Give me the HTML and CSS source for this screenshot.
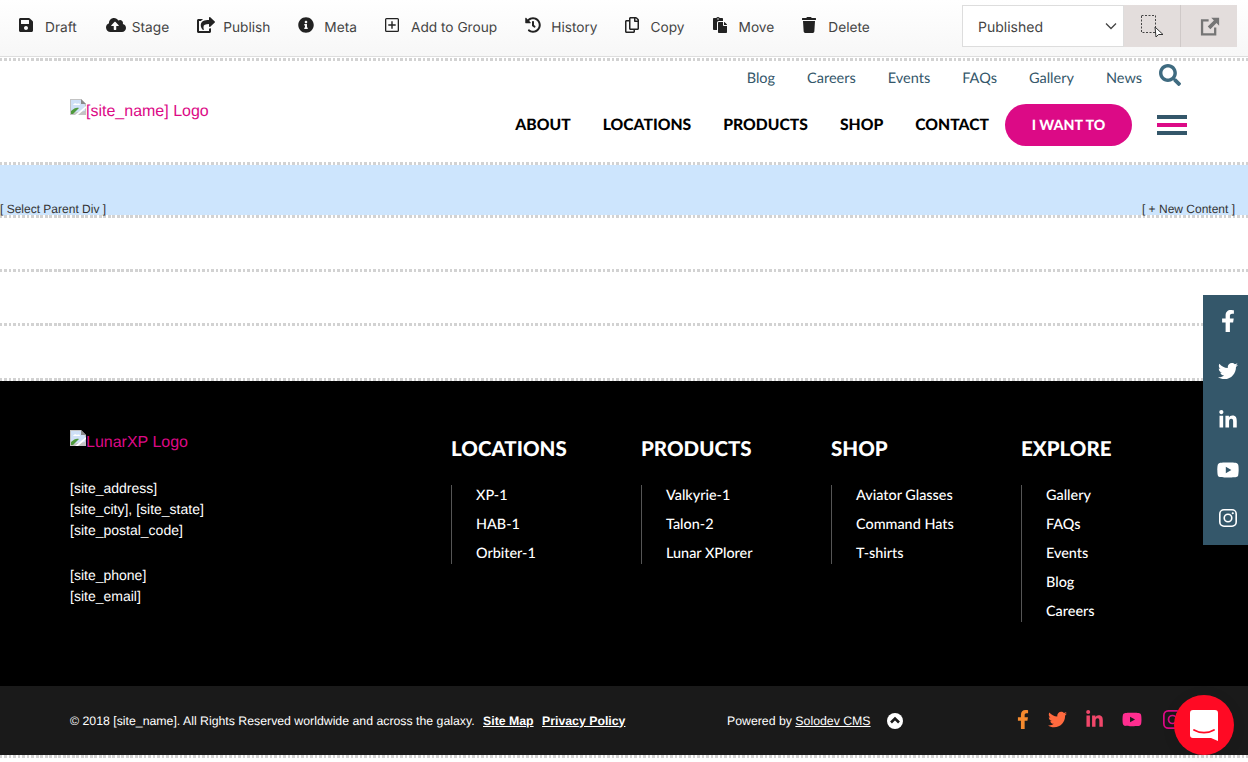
FILE: index.html
```html
<!DOCTYPE html>
<html lang="en">
<head>
  <meta charset="UTF-8" />
  <title>Solodev CMS</title>
  <link rel="stylesheet" href="styles.css">
</head>
<body>
  <svg class="sprite" aria-hidden="true">
    <symbol id="i-save" viewBox="0 0 448 512"><path d="M433.941 129.941l-83.882-83.882A48 48 0 0 0 316.118 32H48C21.49 32 0 53.49 0 80v352c0 26.51 21.49 48 48 48h352c26.51 0 48-21.49 48-48V163.882a48 48 0 0 0-14.059-33.941zM224 416c-35.346 0-64-28.654-64-64 0-35.346 28.654-64 64-64s64 28.654 64 64c0 35.346-28.654 64-64 64zm96-304.52V212c0 6.627-5.373 12-12 12H76c-6.627 0-12-5.373-12-12V108c0-6.627 5.373-12 12-12h228.52c3.183 0 6.235 1.264 8.485 3.515l3.48 3.48A11.996 11.996 0 0 1 320 111.48z"/></symbol>
    <symbol id="i-cloud" viewBox="0 0 640 512"><path d="M537.6 226.6c4.1-10.7 6.4-22.4 6.4-34.6 0-53-43-96-96-96-19.7 0-38.1 6-53.3 16.2C367 64.2 315.3 32 256 32c-88.4 0-160 71.6-160 160 0 2.7.1 5.4.2 8.1C40.2 219.8 0 273.2 0 336c0 79.5 64.5 144 144 144h368c70.7 0 128-57.3 128-128 0-61.9-44-113.6-102.4-125.4zM393.4 288H328v112c0 8.8-7.2 16-16 16h-48c-8.8 0-16-7.2-16-16V288h-65.4c-14.3 0-21.4-17.2-11.3-27.3l105.4-105.4c6.2-6.2 16.4-6.2 22.6 0l105.4 105.4c10.1 10.1 2.9 27.3-11.3 27.3z"/></symbol>
    <symbol id="i-share" viewBox="0 0 576 512"><path d="M568.482 177.448L424.479 313.433C409.3 327.768 384 317.14 384 295.985v-71.963c-144.575.97-205.566 35.113-164.775 171.353 4.483 14.973-12.846 26.567-25.006 17.33C155.252 383.105 120 326.488 120 269.339c0-143.937 117.599-172.5 264-173.312V24.012c0-21.174 25.317-31.768 40.479-17.448l144.003 135.988c10.02 9.463 10.028 25.425 0 34.896zM384 379.128V448H64V128h50.916a11.99 11.99 0 0 0 8.648-3.693c14.953-15.568 32.237-27.89 51.014-37.676C186.708 80.83 184.958 64 173.232 64H48C21.49 64 0 85.49 0 112v352c0 26.51 21.49 48 48 48h352c26.51 0 48-21.49 48-48v-88.806c0-8.288-8.197-14.066-16.011-11.302a71.83 71.83 0 0 1-34.189 3.377c-7.27-1.046-13.8 4.514-13.8 11.859z"/></symbol>
    <symbol id="i-info" viewBox="0 0 512 512"><path d="M256 8C119.043 8 8 119.083 8 256c0 136.997 111.043 248 248 248s248-111.003 248-248C504 119.083 392.957 8 256 8zm0 110c23.196 0 42 18.804 42 42s-18.804 42-42 42-42-18.804-42-42 18.804-42 42-42zm56 254c0 6.627-5.373 12-12 12h-88c-6.627 0-12-5.373-12-12v-24c0-6.627 5.373-12 12-12h12v-64h-12c-6.627 0-12-5.373-12-12v-24c0-6.627 5.373-12 12-12h64c6.627 0 12 5.373 12 12v100h12c6.627 0 12 5.373 12 12v24z"/></symbol>
    <symbol id="i-plus" viewBox="0 0 14 14"><path d="M1.5 0h11A1.5 1.5 0 0 1 14 1.5v11a1.5 1.5 0 0 1-1.5 1.5h-11A1.5 1.5 0 0 1 0 12.500v-11A1.500 1.500 0 0 1 1.500 0zM1.300 1.300v11.400h11.400V1.300zM6.300 3.300h1.400v3h3v1.400h-3v3H6.300v-3h-3V6.300h3z"/></symbol>
    <symbol id="i-history" viewBox="0 0 512 512"><path d="M504 255.531c.253 136.64-111.18 248.372-247.82 248.468-59.015.042-113.223-20.53-155.822-54.911-11.077-8.94-11.905-25.541-1.839-35.607l11.267-11.267c8.609-8.609 22.353-9.551 31.891-1.984C173.062 425.135 212.781 440 256 440c101.705 0 184-82.311 184-184 0-101.705-82.311-184-184-184-48.814 0-93.149 18.969-126.068 49.932l50.754 50.754c10.08 10.08 2.941 27.314-11.313 27.314H24c-8.837 0-16-7.163-16-16V38.627c0-14.254 17.234-21.393 27.314-11.314l49.372 49.372C129.209 34.136 189.552 8 256 8c136.81 0 247.747 110.78 248 247.531zm-180.912 78.784l9.823-12.63c8.138-10.463 6.253-25.542-4.21-33.679L288 256.349V152c0-13.255-10.745-24-24-24h-16c-13.255 0-24 10.745-24 24v135.651l65.409 50.874c10.463 8.137 25.541 6.253 33.679-4.21z"/></symbol>
    <symbol id="i-copy" viewBox="0 0 448 512"><path d="M433.941 65.941l-51.882-51.882A48 48 0 0 0 348.118 0H176c-26.51 0-48 21.49-48 48v48H48c-26.51 0-48 21.49-48 48v320c0 26.51 21.49 48 48 48h224c26.51 0 48-21.49 48-48v-48h80c26.51 0 48-21.49 48-48V99.882a48 48 0 0 0-14.059-33.941zM266 464H54a6 6 0 0 1-6-6V150a6 6 0 0 1 6-6h74v224c0 26.51 21.49 48 48 48h96v42a6 6 0 0 1-6 6zm128-96H182a6 6 0 0 1-6-6V54a6 6 0 0 1 6-6h106v88c0 13.255 10.745 24 24 24h88v202a6 6 0 0 1-6 6zm6-256h-64V48h9.632c1.591 0 3.117.632 4.243 1.757l48.368 48.368a6 6 0 0 1 1.757 4.243V112z"/></symbol>
    <symbol id="i-paste" viewBox="0 0 448 512"><path d="M128 184c0-30.879 25.122-56 56-56h136V56c0-13.255-10.745-24-24-24h-80.61C204.306 12.89 183.637 0 160 0s-44.306 12.89-55.39 32H24C10.745 32 0 42.745 0 56v336c0 13.255 10.745 24 24 24h104V184zm32-144c13.255 0 24 10.745 24 24s-10.745 24-24 24-24-10.745-24-24 10.745-24 24-24zm184 248h104v200c0 13.255-10.745 24-24 24H184c-13.255 0-24-10.745-24-24V184c0-13.255 10.745-24 24-24h136v104c0 13.2 10.8 24 24 24zm104-38.059V256h-96v-96h6.059a24 24 0 0 1 16.97 7.029l65.941 65.941a24.002 24.002 0 0 1 7.03 16.971z"/></symbol>
    <symbol id="i-trash" viewBox="0 0 448 512"><path d="M432 32H312l-9.4-18.7A24 24 0 0 0 281.1 0H166.8a23.72 23.72 0 0 0-21.4 13.3L136 32H16A16 16 0 0 0 0 48v32a16 16 0 0 0 16 16h416a16 16 0 0 0 16-16V48a16 16 0 0 0-16-16zM53.2 467a48 48 0 0 0 47.9 45h245.8a48 48 0 0 0 47.9-45L416 128H32z"/></symbol>
    <symbol id="i-search" viewBox="0 0 512 512"><path d="M505 442.7L405.3 343c-4.5-4.5-10.6-7-17-7H372c27.6-35.3 44-79.700 44-128C416 93.100 322.900 0 208 0S0 93.100 0 208s93.100 208 208 208c48.300 0 92.700-16.400 128-44v16.300c0 6.400 2.500 12.500 7 17l99.700 99.700c9.400 9.400 24.600 9.400 33.900 0l28.300-28.300c9.400-9.400 9.400-24.600.1-34zM208 336c-70.700 0-128-57.200-128-128 0-70.700 57.200-128 128-128 70.700 0 128 57.200 128 128 0 70.700-57.200 128-128 128z"/></symbol>
    <symbol id="i-facebook" viewBox="0 0 320 512"><path d="M279.14 288l14.22-92.66h-88.91v-60.13c0-25.35 12.42-50.06 52.24-50.06h40.42V6.26S260.43 0 225.36 0c-73.22 0-121.08 44.38-121.08 124.72v70.62H22.89V288h81.39v224h100.17V288z"/></symbol>
    <symbol id="i-twitter" viewBox="0 0 512 512"><path d="M459.37 151.716c.325 4.548.325 9.097.325 13.645 0 138.72-105.583 298.558-298.558 298.558-59.452 0-114.68-17.219-161.137-47.106 8.447.974 16.568 1.299 25.34 1.299 49.055 0 94.213-16.568 130.274-44.832-46.132-.975-84.792-31.188-98.112-72.772 6.498.974 12.995 1.624 19.818 1.624 9.421 0 18.843-1.3 27.614-3.573-48.081-9.747-84.143-51.98-84.143-102.985v-1.299c13.969 7.797 30.214 12.67 47.431 13.319-28.264-18.843-46.781-51.005-46.781-87.391 0-19.492 5.197-37.36 14.294-52.954 51.655 63.675 129.3 105.258 216.365 109.807-1.624-7.797-2.599-15.918-2.599-24.04 0-57.828 46.782-104.934 104.934-104.934 30.213 0 57.502 12.67 76.67 33.137 23.715-4.548 46.456-13.32 66.599-25.34-7.798 24.366-24.366 44.833-46.132 57.827 21.117-2.273 41.584-8.122 60.426-16.243-14.292 20.791-32.161 39.308-52.628 54.253z"/></symbol>
    <symbol id="i-linkedin" viewBox="0 0 448 512"><path d="M100.28 448H7.4V148.9h92.88zM53.79 108.1C24.09 108.1 0 83.5 0 53.8a53.79 53.79 0 0 1 107.58 0c0 29.7-24.1 54.3-53.79 54.3zM447.9 448h-92.68V302.4c0-34.7-.7-79.2-48.29-79.2-48.29 0-55.69 37.7-55.69 76.7V448h-92.78V148.9h89.08v40.8h1.3c12.4-23.5 42.69-48.3 87.88-48.3 94 0 111.28 61.9 111.28 142.3V448z"/></symbol>
    <symbol id="i-youtube" viewBox="0 0 576 512"><path d="M549.655 124.083c-6.281-23.65-24.787-42.276-48.284-48.597C458.781 64 288 64 288 64S117.22 64 74.629 75.486c-23.497 6.322-42.003 24.947-48.284 48.597-11.412 42.867-11.412 132.305-11.412 132.305s0 89.438 11.412 132.305c6.281 23.65 24.787 41.5 48.284 47.821C117.22 448 288 448 288 448s170.78 0 213.371-11.486c23.497-6.321 42.003-24.171 48.284-47.821 11.412-42.867 11.412-132.305 11.412-132.305s0-89.438-11.412-132.305zm-317.51 213.508V175.185l142.739 81.205-142.739 81.201z"/></symbol>
    <symbol id="i-instagram" viewBox="0 0 20 20"><path fill-rule="evenodd" d="M5.500 0h9A5.500 5.500 0 0 1 20 5.500v9a5.500 5.500 0 0 1-5.500 5.500h-9A5.500 5.500 0 0 1 0 14.500v-9A5.500 5.500 0 0 1 5.500 0zm0 1.800A3.700 3.700 0 0 0 1.800 5.500v9a3.700 3.700 0 0 0 3.700 3.700h9a3.700 3.700 0 0 0 3.700-3.700v-9a3.700 3.700 0 0 0-3.700-3.700zM10 4.900a5.100 5.100 0 1 1 0 10.200 5.100 5.100 0 0 1 0-10.200zm0 1.800a3.300 3.300 0 1 0 0 6.600 3.300 3.300 0 0 0 0-6.600zM15.300 3.500a1.200 1.200 0 1 1 0 2.400 1.200 1.200 0 0 1 0-2.400z"/></symbol>
    <symbol id="i-broken" viewBox="0 0 16 16">
      <path fill="#c3c3c3" d="M0 0h11l5 5v11H0z"/>
      <path fill="#cfe0f7" d="M1 1h9.500L15 5.500V12L1 14z"/>
      <path fill="#fff" d="M3 6c1-2 3-2 4-1 2-1 3 0 3 1z"/>
      <path fill="#4f9a3c" d="M1 15v-3c3-3 6-4 8-3l-6 6z"/>
      <path fill="#fff" d="M5 16l11-9v2L8 16z"/>
      <path fill="#8a8a8a" d="M11 0v5h5z"/>
    </symbol>
  </svg>

  <div class="toolbar">
    <a class="tool draft"><svg class="tool-icon w14"><use href="#i-save"/></svg>Draft</a>
    <a class="tool"><svg class="tool-icon w20"><use href="#i-cloud"/></svg>Stage</a>
    <a class="tool"><svg class="tool-icon w18"><use href="#i-share"/></svg>Publish</a>
    <a class="tool"><svg class="tool-icon w16"><use href="#i-info"/></svg>Meta</a>
    <a class="tool"><svg class="tool-icon w14"><use href="#i-plus"/></svg>Add to Group</a>
    <a class="tool history"><svg class="tool-icon w16"><use href="#i-history"/></svg>History</a>
    <a class="tool"><svg class="tool-icon w14"><use href="#i-copy"/></svg>Copy</a>
    <a class="tool"><svg class="tool-icon w14"><use href="#i-paste"/></svg>Move</a>
    <a class="tool"><svg class="tool-icon w14"><use href="#i-trash"/></svg>Delete</a>

    <div class="status">
      <div class="status-select">Published
        <svg class="chevron" viewBox="0 0 12 8"><path d="M1 1.500l5 5 5-5" fill="none" stroke="#444" stroke-width="1.300"/></svg>
      </div>
      <a class="status-btn">
        <svg class="status-icon" viewBox="0 0 24 24">
          <rect x="1.500" y="1.500" width="14" height="17" fill="none" stroke="#444" stroke-width="1" stroke-dasharray="2 1.500"/>
          <path d="M15 13l1 10 2.500-2.500 4.500 0z" fill="#fff" stroke="#333" stroke-width="1"/>
        </svg>
      </a>
      <a class="status-btn">
        <svg class="status-icon small" viewBox="0 0 24 24">
          <path d="M11 5H3.500v16h15v-8" fill="none" stroke="#757575" stroke-width="2.600"/>
          <path d="M14 2h9v9l-3-3-7 7-3-3 7-7z" fill="#757575"/>
        </svg>
      </a>
    </div>
  </div>

  <div class="dots first"></div>
  <header class="site-header">
    <a class="logo"><svg class="broken"><use href="#i-broken"/></svg>[site_name] Logo</a>
    <div class="header-nav">
      <nav class="top-nav">
        <a>Blog</a>
        <a>Careers</a>
        <a>Events</a>
        <a>FAQs</a>
        <a>Gallery</a>
        <a>News</a>
        <svg class="search"><use href="#i-search"/></svg>
      </nav>
      <nav class="main-nav">
        <a>ABOUT</a>
        <a>LOCATIONS</a>
        <a>PRODUCTS</a>
        <a>SHOP</a>
        <a>CONTACT</a>
        <a class="want-btn">I WANT TO</a>
        <div class="burger"><span></span><span class="mid"></span><span></span></div>
      </nav>
    </div>
  </header>

  <div class="dots"></div>
  <div class="region-active">
    <a>[ Select Parent Div ]</a>
    <a>[ + New Content ]</a>
  </div>
  <div class="dots"></div>
  <div class="region-empty"></div>
  <div class="dots"></div>
  <div class="region-empty"></div>
  <div class="dots"></div>
  <div class="region-empty last"></div>
  <div class="dots"></div>

  <footer class="site-footer">
    <div class="footer-info">
      <a class="logo"><svg class="broken"><use href="#i-broken"/></svg>LunarXP Logo</a>
      <p>[site_address]<br>[site_city], [site_state]<br>[site_postal_code]</p>
      <p>[site_phone]<br>[site_email]</p>
    </div>
    <div class="footer-col">
      <h3>LOCATIONS</h3>
      <ul>
        <li>XP-1</li>
        <li>HAB-1</li>
        <li>Orbiter-1</li>
      </ul>
    </div>
    <div class="footer-col">
      <h3>PRODUCTS</h3>
      <ul>
        <li>Valkyrie-1</li>
        <li>Talon-2</li>
        <li>Lunar XPlorer</li>
      </ul>
    </div>
    <div class="footer-col">
      <h3>SHOP</h3>
      <ul>
        <li>Aviator Glasses</li>
        <li>Command Hats</li>
        <li>T-shirts</li>
      </ul>
    </div>
    <div class="footer-col">
      <h3>EXPLORE</h3>
      <ul>
        <li>Gallery</li>
        <li>FAQs</li>
        <li>Events</li>
        <li>Blog</li>
        <li>Careers</li>
      </ul>
    </div>
  </footer>

  <div class="sub-footer">
    <div class="copyright">© 2018 [site_name]. All Rights Reserved worldwide and across the galaxy. <a class="strong">Site Map</a> <a class="strong">Privacy Policy</a></div>
    <div class="powered">Powered by <a>Solodev CMS</a></div>
    <svg class="to-top" viewBox="0 0 16 16"><circle cx="8" cy="8" r="8" fill="#fff"/><path d="M4 9.500l4-4 4 4" fill="none" stroke="#1a1a1a" stroke-width="2.600"/></svg>
    <div class="sub-social">
      <svg class="s-fb"><use href="#i-facebook"/></svg>
      <svg class="s-tw"><use href="#i-twitter"/></svg>
      <svg class="s-in"><use href="#i-linkedin"/></svg>
      <svg class="s-yt"><use href="#i-youtube"/></svg>
      <svg class="s-ig"><use href="#i-instagram"/></svg>
    </div>
  </div>
  <div class="dots"></div>

  <div class="side-social">
    <svg class="side-fb"><use href="#i-facebook"/></svg>
    <svg><use href="#i-twitter"/></svg>
    <svg><use href="#i-linkedin"/></svg>
    <svg class="side-yt"><use href="#i-youtube"/></svg>
    <svg class="side-ig"><use href="#i-instagram"/></svg>
  </div>

  <div class="chat">
    <svg viewBox="0 0 28 31" width="28" height="31">
      <path fill="#fff" d="M3 0h22a3 3 0 0 1 3 3v28l-7-3H3a3 3 0 0 1-3-3V3a3 3 0 0 1 3-3z"/>
      <path fill="none" stroke="#ff0a24" stroke-width="1.800" stroke-linecap="round" d="M4 20c6 3.500 14 3.500 20 0"/>
    </svg>
  </div>
</body>
</html>
```

FILE: styles.css
```css
html, body {
  margin: 0;
  padding: 0;
  height: 762px;
  overflow: hidden;
  background: white;
}

body {
  position: relative;
  font-family: 'Liberation Sans', sans-serif;
  text-rendering: geometricPrecision;
}

a {
  color: inherit;
  text-decoration: none;
}

.sprite {
  display: none;
}

/* CMS toolbar */
.toolbar {
  box-sizing: border-box;
  height: 57px;
  display: flex;
  align-items: center;
  gap: 28px;
  padding: 0 11px 0 19px;
  background: linear-gradient(#fff, #f7f7f7);
  border-bottom: 1px solid #ddd;
  font-family: 'Inter', sans-serif;
  font-size: 13.7px;
  color: #444;
}

.tool {
  display: flex;
  align-items: center;
  padding-bottom: 1px;
}

.tool.draft {
  padding-right: 1px;
}

.tool.history {
  margin-right: -1px;
}

.tool-icon {
  height: 16px;
  margin-top: -5px;
  fill: #222;
}

.tool-icon.w14 { width: 14px; margin-right: 12px; }
.tool-icon.w16 { width: 16px; margin-right: 10px; }
.tool-icon.w18 { width: 18px; margin-right: 8px; }
.tool-icon.w20 { width: 20px; margin-right: 6px; }

.status {
  margin-left: auto;
  display: flex;
  height: 42px;
  margin-top: -4px;
  font-size: 14px;
}

.status-select {
  box-sizing: border-box;
  width: 162px;
  display: flex;
  align-items: center;
  justify-content: space-between;
  padding: 2px 6px 0 15px;
  background: white;
  border: 1px solid #ddd;
}

.chevron {
  width: 12px;
  height: 8px;
  margin-top: -2px;
}

.status-btn {
  width: 56px;
  display: flex;
  align-items: center;
  justify-content: center;
  background: #e3dddc;
}

.status-btn + .status-btn {
  border-left: 1px solid #cfc9c8;
}

.status-icon {
  width: 24px;
  height: 24px;
}

.status-icon.small {
  width: 21px;
  height: 21px;
}

/* Dotted edges of the drop regions */
.dots {
  height: 3px;
  background: repeating-linear-gradient(90deg, #d2d2d2 0 2.5px, #fff 2.5px 4.5px);
}

.dots.first {
  margin-top: 1px;
}

.site-header {
  box-sizing: border-box;
  height: 101px;
  padding: 0 61px 0 70px;
  display: flex;
  justify-content: space-between;
}

.logo {
  font-size: 16px;
  color: #dc0a86;
  display: inline-flex;
  align-items: flex-start;
  line-height: 18px;
}

.site-header .logo {
  margin-top: 42px;
  align-self: flex-start;
}

.broken {
  width: 16px;
  height: 16px;
  margin-top: -4px;
}

.header-nav {
  display: flex;
  flex-direction: column;
  align-items: flex-end;
}

.top-nav {
  display: flex;
  gap: 32px;
  margin-top: -2px;
  height: 39px;
  align-items: center;
  font-family: 'Lato', sans-serif;
  font-size: 14.5px;
  color: #34576a;
}

.search {
  width: 22px;
  height: 22px;
  fill: #3f6b80;
  margin: -8px 6px 0 -15px;
}

.main-nav {
  display: flex;
  align-items: center;
  margin-top: 6px;
  font-family: 'Lato', sans-serif;
  font-weight: 900;
  font-size: 15.7px;
  color: black;
  gap: 32px;
}

.main-nav .want-btn {
  box-sizing: border-box;
  width: 127px;
  height: 42px;
  margin-left: -16px;
  border-radius: 21px;
  background: #dc0a86;
  color: white;
  font-size: 14.2px;
  display: flex;
  align-items: center;
  justify-content: center;
}

.burger {
  width: 30px;
  margin-left: -7px;
  display: flex;
  flex-direction: column;
  gap: 4px;
}

.burger span {
  height: 4px;
  background: #34576a;
}

.burger .mid {
  background: #dc0a86;
}

.region-active {
  height: 50px;
  background: #cde5fd;
  display: flex;
  justify-content: space-between;
  align-items: flex-end;
  padding: 0 13px 0 0;
  font-size: 12px;
  line-height: 12px;
  color: #333;
}

.region-empty {
  height: 51px;
}

.region-empty.last {
  height: 52px;
}

/* Footer */
.site-footer {
  height: 305px;
  box-sizing: border-box;
  background: black;
  color: white;
  display: flex;
  padding: 53px 0 0 70px;
  font-family: 'Lato', sans-serif;
  font-size: 14.4px;
}

.footer-info {
  width: 381px;
  font-family: 'Liberation Sans', sans-serif;
  font-size: 14px;
  line-height: 21px;
}

.footer-info p {
  margin: 0 0 24px;
}

.footer-info .logo {
  margin-bottom: 26px;
  display: flex;
}

.footer-col {
  width: 190px;
}

.footer-col h3 {
  margin: 4px 0 25px;
  font-size: 20.5px;
  line-height: 22px;
  font-weight: 900;
}

.footer-col ul {
  list-style: none;
  margin: 0;
  padding: 0 0 0 24px;
  border-left: 1px solid #555;
}

.footer-col li {
  height: 29px;
  line-height: 22px;
  font-weight: 500;
}

.footer-col li:last-child {
  height: 21px;
}

/* Bottom bar */
.sub-footer {
  height: 69px;
  background: #1a1a1a;
  color: white;
  display: flex;
  align-items: center;
  padding-left: 70px;
  font-size: 12.3px;
}

.copyright {
  width: 657px;
}

.strong {
  font-weight: 700;
  text-decoration: underline;
  margin-left: 5px;
}

.powered a {
  text-decoration: underline;
}

.to-top {
  width: 16px;
  height: 16px;
  margin-left: 16px;
}

.sub-social {
  display: flex;
  align-items: center;
  margin: -2px 0 0 114px;
  gap: 19px;
}

.sub-social svg {
  height: 19px;
}

.s-fb { width: 12px; fill: #f58a2e; }
.s-tw { width: 19px; fill: #ff6a3f; }
.s-in { width: 17px; fill: #f0476a; }
.s-yt { width: 20px; fill: #ff2d8f; }
.s-ig { width: 19px; margin-left: 2px; fill: #dc0a86; }

/* Floating widgets */
.side-social {
  position: absolute;
  top: 295px;
  right: 0;
  box-sizing: border-box;
  width: 45px;
  height: 250px;
  padding: 0 0 3px 5px;
  background: #34576a;
  display: flex;
  flex-direction: column;
  align-items: center;
  justify-content: space-around;
  fill: white;
}

.side-social svg {
  width: 20px;
  height: 20px;
}

.side-social .side-fb { height: 22px; }
.side-social .side-yt { width: 24px; }
.side-social .side-ig { height: 18px; width: 18px; }

.chat {
  position: absolute;
  left: 1174px;
  top: 695px;
  width: 60px;
  height: 60px;
  border-radius: 50%;
  background: #ff0a24;
  display: flex;
  align-items: center;
  justify-content: center;
  box-shadow: 0 2px 16px rgba(0, 0, 0, 0.06);
}
```
